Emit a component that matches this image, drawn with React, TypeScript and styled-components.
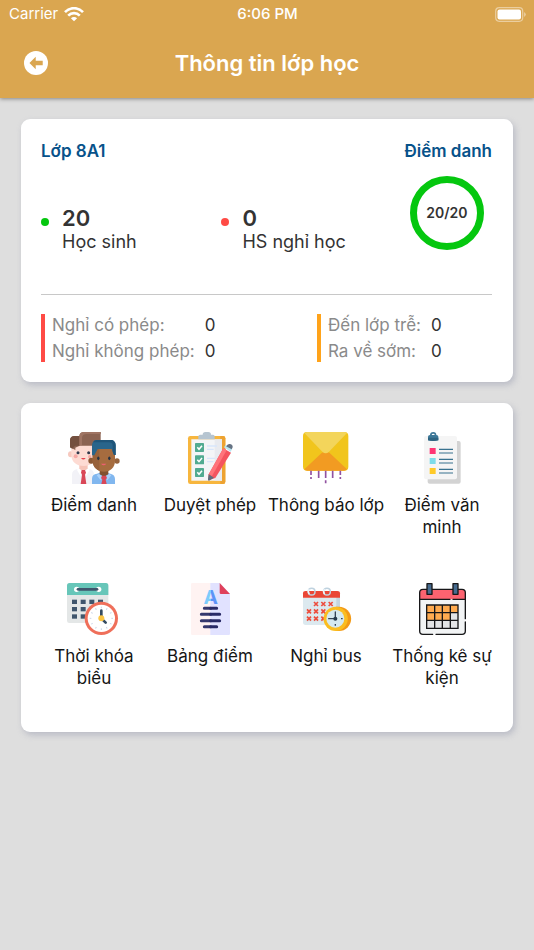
import React from "react";
import styled, { createGlobalStyle } from "styled-components";

const GlobalStyle = createGlobalStyle`
  * { box-sizing: border-box; }
  body {
    margin: 0;
    background: #dedede;
    color: #333;
    font-family: Inter, "Noto Sans", sans-serif;
    font-size: 17px;
    line-height: 22px;
  }
  h1, h2, p, dl, dt, dd, ul { margin: 0; padding: 0; }
  ul { list-style: none; }
  button { font: inherit; color: inherit; border: 0; padding: 0; background: none; cursor: pointer; }
`;

const Header = styled.header`
  background: #daa650;
  color: #fff;
  box-shadow: 0 1px 4px rgba(0, 0, 0, 0.4);
`;

const StatusBar = styled.div`
  display: grid;
  grid-template-columns: 1fr auto 1fr;
  align-items: center;
  height: 28px;
  padding: 0 8px 0 9px;
  font-size: 15px;
`;

const Carrier = styled.span`
  display: flex;
  align-items: center;
  gap: 6px;
`;

const Clock = styled.time`
  font-weight: 500;
`;

const BatteryIcon = styled.svg`
  justify-self: end;
`;

const TitleBar = styled.div`
  display: grid;
  grid-template-columns: 24px 1fr 24px;
  align-items: center;
  height: 70px;
  padding: 0 24px;
`;

const BackButton = styled.button`
  display: flex;
`;

const Title = styled.h1`
  font-size: 22px;
  line-height: 28px;
  font-weight: 600;
  text-align: center;
`;

const Main = styled.main`
  display: flex;
  flex-direction: column;
  gap: 21px;
  padding: 21px;
`;

const Card = styled.section`
  background: #fff;
  border-radius: 9px;
  box-shadow: 2px 3px 6px rgba(130, 135, 160, 0.4);
`;

const SummaryCard = styled(Card)`
  padding: 21px 21px 20px 20px;
`;

const Overview = styled.div`
  display: grid;
  grid-template-columns: 2fr 2fr 1fr;
  row-gap: 14px;
  padding-bottom: 41px;
  border-bottom: 1px solid #c8c8c8;
`;

const ClassName = styled.h2`
  grid-column: span 2;
  color: #07528a;
  font-size: 17px;
  font-weight: 600;
`;

const AttendanceLink = styled.a`
  justify-self: end;
  color: #07528a;
  font-weight: 600;
  text-decoration: none;
  white-space: nowrap;
`;

const Stat = styled.div<{ $color: string }>`
  display: grid;
  grid-template-columns: 8px auto;
  column-gap: 13px;
  justify-content: start;
  align-items: center;
  padding-top: 29px;

  &::before {
    content: "";
    height: 8px;
    margin-top: 8px;
    border-radius: 50%;
    background: ${(p) => p.$color};
  }
`;

const StatValue = styled.strong`
  font-size: 22px;
  line-height: 26px;
  font-weight: 600;
`;

const StatLabel = styled.span`
  grid-column: 2;
  font-size: 18px;
`;

const Ring = styled.div`
  justify-self: center;
  display: grid;
  place-items: center;
  width: 74px;
  height: 74px;
  border: 7px solid #05c70f;
  border-radius: 50%;
  font-size: 14px;
  font-weight: 600;
`;

const Details = styled.div`
  display: grid;
  grid-template-columns: 1fr 175px;
  padding-top: 19px;
`;

const DetailGroup = styled.dl<{ $color: string }>`
  display: grid;
  grid-template-columns: auto auto;
  justify-content: start;
  gap: 4px 10px;
  padding-left: 7px;
  border-left: 4px solid ${(p) => p.$color};
  white-space: nowrap;
`;

const DetailLabel = styled.dt`
  color: #8a8a8a;
`;

const DetailValue = styled.dd`
  color: #333;
`;

const MenuCard = styled(Card)`
  padding: 29px 13px 43px 15px;
`;

const Menu = styled.ul`
  display: grid;
  grid-template-columns: repeat(4, minmax(0, 1fr));
  row-gap: 45px;
`;

const MenuButton = styled.button`
  display: flex;
  flex-direction: column;
  align-items: center;
  gap: 10px;
  width: 100%;
  color: #151515;
`;

const MenuLabel = styled.span`
  width: max-content;
  max-width: 117px;
`;

const MenuIcon = styled.svg`
  width: 52px;
  height: 52px;
  overflow: visible;
`;

const WifiIcon = () => (
  <svg width="20" height="15" viewBox="0 0 20 15" aria-hidden="true">
    <g fill="none" stroke="#fff" strokeWidth="2.6">
      <path d="M1 5.2C6-.2 14-.2 19 5.2" />
      <path d="M4.2 8.7c3.3-3.4 8.300-3.400 11.600 0" />
    </g>
    <path d="M6.900 11.200c1.800-1.700 4.400-1.700 6.200 0L10 14.300z" fill="#fff" />
  </svg>
);

const StudentsIcon = () => (
  <MenuIcon viewBox="54 36 156 156" aria-hidden="true">
    <path d="M66 192v-28q0-14 16-17l18-5 19 5q13 3 13 17v28z" fill="#f2f2f7" />
    <path d="M88 128h25v18l-13 9-12-9z" fill="#f6c4b8" />
    <ellipse cx="62" cy="103" rx="8" ry="9" fill="#f7c9bf" />
    <path d="M64 75h73v33c0 19-17 30-36 30-22 0-37-13-37-32z" fill="#fddbd3" />
    <path d="M60 82V61c0-8 6-13 14-13h14c0-7 5-12 14-12h50v24c0 9-8 17-17 17H89l-13 6v7z" fill="#8b6352" />
    <path d="M88 48v29H75l-8 9-7-4V60c0-7 5-12 13-12z" fill="#74503f" />
    <path d="M102 36h50v6h-42c-9 0-14 4-14 12v21h-8V50c0-8 5-14 14-14z" fill="#9f7463" />
    <circle cx="84" cy="98" r="4.500" fill="#30394d" /><circle cx="116" cy="98" r="4.500" fill="#30394d" />
    <circle cx="77" cy="109" r="6" fill="#f6a9a5" /><circle cx="119" cy="110" r="5" fill="#f6a9a5" />
    <path d="M93 114q7 9 14 0z" fill="#e7424e" />
    <path d="m84 145 16 10-9 12-10-17zM116 145l-16 10 9 12 10-17z" fill="#fff" />
    <path d="m95 150h10l3 8-3 6 4 28H92l4-28-3-6z" fill="#d94758" />
    <path d="M126 192v-16q0-13 15-15l20-7 20 7q14 3 14 16v15z" fill="#81b7ef" />
    <path d="M149 148h26v15l-13 8-13-8z" fill="#81512f" />
    <circle cx="124" cy="122" r="9" fill="#8b5935" /><circle cx="201" cy="123" r="8" fill="#97633c" />
    <path d="M128 84h67v39c0 19-14 32-33 32s-34-13-34-32z" fill="#a66c3f" />
    <path d="M128 84h20v68c-12-5-20-15-20-29z" fill="#97613a" />
    <path d="M126 106V77c0-11 7-17 17-17h39c9 0 15 6 15 16v29h-5l-7-18h-42l-10 19z" fill="#29658b" />
    <path d="M140 60h42c9 0 15 6 15 16v29h-5l-4-10V77c0-7-4-10-11-10h-48q3-7 11-7z" fill="#1f5579" />
    <ellipse cx="145" cy="115" rx="3.500" ry="5.500" fill="#263344" /><ellipse cx="178" cy="115" rx="3.500" ry="5.500" fill="#263344" />
    <path d="M153 131q8 9 16 0z" fill="#ee6070" />
    <path d="m146 162 16 9-10 10-12-15zM178 162l-16 9 10 10 12-15z" fill="#a9d1fa" />
    <path d="M156 167h12l3 7-4 5 3 13h-16l3-13-4-5z" fill="#d94758" />
  </MenuIcon>
);

const ChecklistIcon = () => (
  <MenuIcon viewBox="42 36 156 156" aria-hidden="true">
    <rect x="54" y="48" width="112" height="144" rx="7" fill="#f7b63e" />
    <path d="M151 48h8q7 0 7 7v130q0 7-7 7h-8z" fill="#eda231" />
    <path d="M64 58h92v124H64z" fill="#f4f5f7" />
    <path d="M134 58h22v124h-22z" fill="#e8eaef" />
    <path d="M85 58V49q0-5 6-5h7q0-8 8-8h9q8 0 8 8h6q5 0 5 5v9z" fill="#b6c5d1" />
    {[69, 106, 144].map((y) => (
      <g key={y}>
        <rect x="75" y={y} width="27" height="27" rx="2" fill="#51ab91" />
        <path d={`m82 ${y + 13} 5 6 9-11`} fill="none" stroke="#fff" strokeWidth="4.500" />
      </g>
    ))}
    <path d="M111 78h30M111 88h20M111 115h24M111 125h19" stroke="#d8e6fb" strokeWidth="4" />
    <path d="m116 163 44-78 23 13-47 76-21 7z" fill="#f4545f" />
    <path d="m116 163 44-78 10 6-44 77z" fill="#ff747b" />
    <path d="m162 82 5-7 20 11-5 9z" fill="#b9e4f1" />
    <path d="M170 77c7-9 20-4 18 5l-3 6-17-9z" fill="#667384" />
    <path d="m116 163 16 10-15 9q-4 0-3-5z" fill="#606c7c" />
  </MenuIcon>
);

const EnvelopeIcon = () => (
  <MenuIcon viewBox="60 36 156 156" aria-hidden="true">
    <rect x="69" y="36" width="136" height="116" rx="12" fill="#f1c51c" />
    <path d="m73 148 52-49q12-9 24 0l52 49q-4 4-9 4H82q-5 0-9-4z" fill="#f29b22" />
    <path d="M73 39q3-3 9-3h110q6 0 9 3l-54 56q-10 9-20 0z" fill="#f3d55b" />
    <path d="M93 152v13m0 6v6M116 152v22M137 152v22m0 7v9M158 152v22M181 152v13m0 6v6" stroke="#9152a1" strokeWidth="5" />
  </MenuIcon>
);

const ClipboardIcon = () => (
  <MenuIcon viewBox="408 36 156 156" aria-hidden="true">
    <rect x="443" y="63" width="99" height="128" rx="6" fill="#d3d3d3" />
    <rect x="432" y="48" width="99" height="130" rx="6" fill="#f5f5f5" />
    <path d="M444 61V50q0-5 6-5 0-9 10-9 9 0 9 9 6 0 6 5v11q-16 4-31 0z" fill="#3d7898" />
    <path d="M455 45q0-4 5-4 4 0 4 4z" fill="#fff" />
    <path d="M444 53h31v8q-16 4-31 0z" fill="#2e6481" />
    <path d="M449 84h18v18h-18z" fill="#ff3474" /><path d="M449 114h18v18h-18z" fill="#7edce9" /><path d="M449 144h18v18h-18z" fill="#ffca28" />
    <path d="M477 88h42m-42 11h42m-42 19h42m-42 11h42m-42 19h42m-42 11h42" stroke="#39728f" strokeWidth="3.500" />
  </MenuIcon>
);

const TimetableIcon = () => (
  <MenuIcon viewBox="54 39 156 156" aria-hidden="true">
    <rect x="51" y="40" width="124" height="119" rx="7" fill="#e4e7e7" />
    <path d="M51 75V47q0-8 8-8h109q7 0 7 8v28z" fill="#67c6b9" />
    <circle cx="80" cy="58" r="8" fill="#fff" /><circle cx="146" cy="58" r="8" fill="#fff" />
    <path d="M84 58h57" stroke="#40566d" strokeWidth="8" strokeLinecap="round" />
    {[89, 111, 133].map((y) => [66, 92, 118, 144].map((x) => <path key={`${x}-${y}`} d={`M${x} ${y}h15v13h-15z`} fill="#40566d" />))}
    <circle cx="154" cy="145" r="50" fill="#ef6f5a" /><circle cx="154" cy="145" r="41" fill="#fff" />
    {[0, 30, 60, 90, 120, 150, 180, 210, 240, 270, 300, 330].map((angle) => (
      <path key={angle} d="M154 110v5" transform={`rotate(${angle} 154 145)`} stroke="#c9d3e6" strokeWidth="3" />
    ))}
    <path d="M154 138v-16M160 151l7 7" stroke="#354b61" strokeWidth="8" strokeLinecap="round" />
    <circle cx="154" cy="145" r="9" fill="#fbc543" />
  </MenuIcon>
);

const GradesIcon = () => (
  <MenuIcon viewBox="402 39 156 156" aria-hidden="true">
    <defs>
      <linearGradient id="grade-letter"><stop offset=".5" stopColor="#7dccfb" /><stop offset=".5" stopColor="#5c93f7" /></linearGradient>
    </defs>
    <path d="M423 42q0-3 4-3h55v156h-55q-4 0-4-4z" fill="#fff3f2" />
    <path d="M481 39h28l31 33v119q0 4-4 4h-55z" fill="#e1e2ff" />
    <path d="m509 39 31 33h-27q-4 0-4-4z" fill="#df405b" />
    <text x="482" y="102" textAnchor="middle" fontFamily="Inter, sans-serif" fontSize="58" fontWeight="700" fill="url(#grade-letter)">A</text>
    <path d="M463 115h19m-28 18h28m-28 19h28m-19 18h19" stroke="#35386d" strokeWidth="9" strokeLinecap="round" />
    <path d="M482 115h18m-18 18h27m-27 19h27m-27 18h18" stroke="#282a67" strokeWidth="9" strokeLinecap="round" />
  </MenuIcon>
);

const BusIcon = () => (
  <MenuIcon viewBox="30 39 156 156" aria-hidden="true">
    <path d="M39 82h111v74q0 9-8 9H47q-8 0-8-8z" fill="#dce9ef" />
    <path d="M139 82h11v74q0 9-8 9h-3z" fill="#c4d6df" />
    <path d="M39 83V70q0-7 8-7h95q8 0 8 7v13z" fill="#ea4635" />
    <g fill="none" strokeWidth="4.500"><circle cx="65" cy="65" r="10" stroke="#bfd2df" /><circle cx="111" cy="65" r="10" stroke="#bfd2df" /><path d="M58 72a10 10 0 0 1 0-14m46 14a10 10 0 0 1 0-14" stroke="#edf6fb" /></g>
    {[[78, 102], [100, 102], [122, 102], [57, 124], [78, 124], [100, 124], [57, 146], [78, 146], [100, 146]].map(([x, y]) => (
      <path key={`${x}-${y}`} d={`m${x - 6} ${y - 6} 12 12m0-12-12 12`} stroke="#ed4d3d" strokeWidth="5" />
    ))}
    <path d="M138 110h9a36 36 0 0 1 0 73h-9z" fill="#f39a16" />
    <circle cx="137" cy="146.500" r="36.500" fill="#fbbd20" /><circle cx="136" cy="146" r="27" fill="#d5e9ef" />
    <path d="M136 126v20h-20" fill="none" stroke="#354557" strokeWidth="4" strokeLinecap="round" />
    <circle cx="136" cy="146" r="6" fill="#263b4c" />
    <path d="M153 146h5m-22 16v5" stroke="#354557" strokeWidth="4" />
  </MenuIcon>
);

const EventsIcon = () => (
  <MenuIcon viewBox="48 39 156 156" aria-hidden="true">
    <rect x="59" y="58" width="137" height="135" rx="10" fill="#f2f4f5" />
    <path d="M59 88V68q0-10 10-10h117q10 0 10 10v20z" fill="#fc6370" />
    <path d="M98 193H69q-10 0-10-10V68q0-10 10-10h117q10 0 10 10v78m0 10v27q0 10-10 10h-78M59 88h91m9 0h37" fill="none" stroke="#171719" strokeWidth="4" strokeLinecap="round" />
    <path d="M80 105h94v23h-23v23H80z" fill="#ffab50" />
    <path d="M151 128h23v47H80v-24h71z" fill="#e4e5e7" />
    <path d="M80 105h94v70H80zM80 128h94m-94 23h94M104 105v70m23-70v70m24-70v70" fill="none" stroke="#171719" strokeWidth="4" />
    <path d="M81 41h15v32H81zM159 41h15v32h-15z" fill="#476c90" stroke="#171719" strokeWidth="4" strokeLinejoin="round" />
  </MenuIcon>
);

const menuItems = [
  { label: "Điểm danh", Icon: StudentsIcon },
  { label: "Duyệt phép", Icon: ChecklistIcon },
  { label: "Thông báo lớp", Icon: EnvelopeIcon },
  { label: "Điểm văn minh", Icon: ClipboardIcon },
  { label: "Thời khóa biểu", Icon: TimetableIcon },
  { label: "Bảng điểm", Icon: GradesIcon },
  { label: "Nghỉ bus", Icon: BusIcon },
  { label: "Thống kê sự kiện", Icon: EventsIcon },
];

export default function App() {
  return (
    <>
      <GlobalStyle />
      <Header>
        <StatusBar>
          <Carrier>Carrier <WifiIcon /></Carrier>
          <Clock>6:06 PM</Clock>
          <BatteryIcon width="31" height="15" viewBox="0 0 31 15" aria-hidden="true">
            <rect x=".7" y=".7" width="27" height="13.600" rx="3.500" fill="none" stroke="#fff" strokeOpacity=".45" strokeWidth="1.200" />
            <rect x="2.500" y="2.500" width="23.500" height="10" rx="2" fill="#fff" />
            <path d="M29.200 5q3 2.500 0 5z" fill="#fff" fillOpacity=".5" />
          </BatteryIcon>
        </StatusBar>
        <TitleBar>
          <BackButton type="button" aria-label="Quay lại">
            <svg width="25" height="26" viewBox="0 0 25 26" aria-hidden="true">
              <circle cx="12.500" cy="13" r="12.500" fill="#fff" />
              <path d="m5.700 13 6.500-6.400v4H19.500v4.800h-7.300v4z" fill="#daa650" />
            </svg>
          </BackButton>
          <Title>Thông tin lớp học</Title>
        </TitleBar>
      </Header>
      <Main>
        <SummaryCard>
          <Overview>
            <ClassName>Lớp 8A1</ClassName>
            <AttendanceLink href="#diem-danh">Điểm danh</AttendanceLink>
            <Stat $color="#05c70f">
              <StatValue>20</StatValue>
              <StatLabel>Học sinh</StatLabel>
            </Stat>
            <Stat $color="#ff4b45">
              <StatValue>0</StatValue>
              <StatLabel>HS nghỉ học</StatLabel>
            </Stat>
            <Ring>20/20</Ring>
          </Overview>
          <Details>
            <DetailGroup $color="#ff4b45">
              <DetailLabel>Nghỉ có phép:</DetailLabel>
              <DetailValue>0</DetailValue>
              <DetailLabel>Nghỉ không phép:</DetailLabel>
              <DetailValue>0</DetailValue>
            </DetailGroup>
            <DetailGroup $color="#ffa31a">
              <DetailLabel>Đến lớp trễ:</DetailLabel>
              <DetailValue>0</DetailValue>
              <DetailLabel>Ra về sớm:</DetailLabel>
              <DetailValue>0</DetailValue>
            </DetailGroup>
          </Details>
        </SummaryCard>
        <MenuCard id="diem-danh">
          <Menu>
            {menuItems.map(({ label, Icon }) => (
              <li key={label}>
                <MenuButton type="button">
                  <Icon />
                  <MenuLabel>{label}</MenuLabel>
                </MenuButton>
              </li>
            ))}
          </Menu>
        </MenuCard>
      </Main>
    </>
  );
}
